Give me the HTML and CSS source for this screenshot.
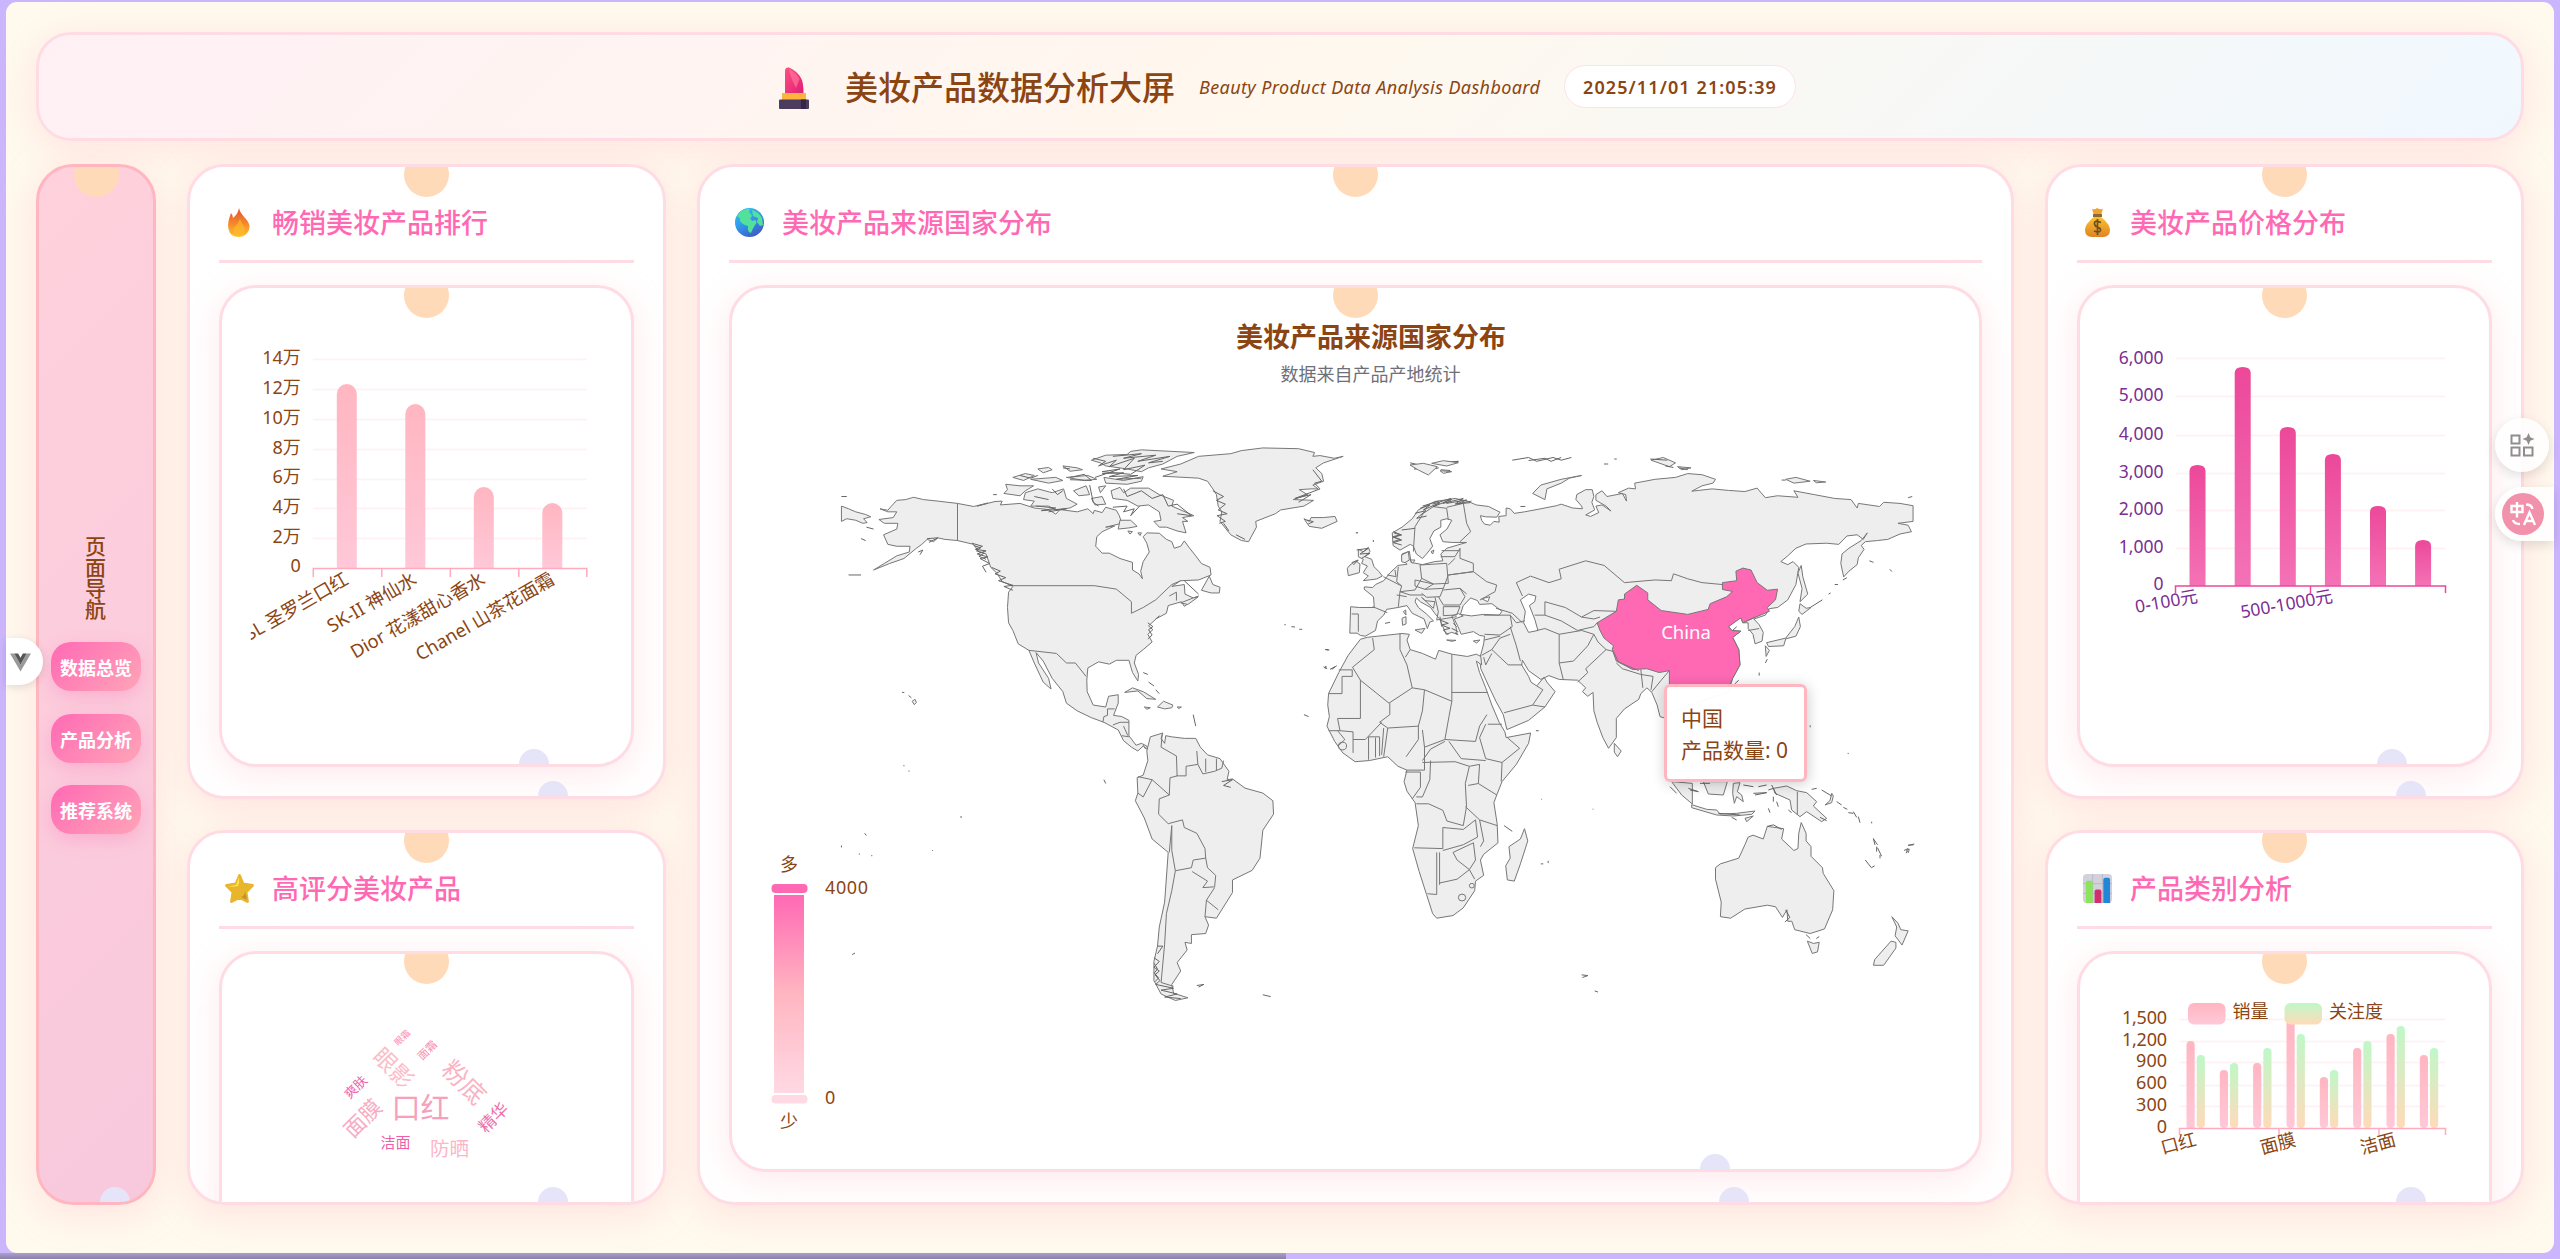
FILE: index.html
```html
<!DOCTYPE html>
<html lang="zh-CN">
<head>
<meta charset="utf-8">
<title>美妆产品数据分析大屏</title>
<link rel="stylesheet" href="styles.css">
</head>
<body>
<svg class="defs" width="0" height="0" aria-hidden="true">
  <defs>
    <linearGradient id="pinkBar" x1="0" y1="0" x2="0" y2="1"><stop offset="0" stop-color="#ffb6c1"/><stop offset="1" stop-color="#ffc8d8"/></linearGradient>
    <linearGradient id="hotBar" x1="0" y1="0" x2="0" y2="1"><stop offset="0" stop-color="#ec4899"/><stop offset="1" stop-color="#f472b6"/></linearGradient>
    <linearGradient id="mintBar" x1="0" y1="0" x2="0" y2="1"><stop offset="0" stop-color="#bff8c8"/><stop offset="1" stop-color="#ffdab9"/></linearGradient>
    <linearGradient id="scale" x1="0" y1="0" x2="0" y2="1"><stop offset="0" stop-color="#ff69b4"/><stop offset=".5" stop-color="#ffb6c1"/><stop offset="1" stop-color="#ffd9e4"/></linearGradient>
    <linearGradient id="flame" x1="0" y1="0" x2="0" y2="1"><stop offset="0" stop-color="#e8502e"/><stop offset=".55" stop-color="#f58a2a"/><stop offset="1" stop-color="#fdc52f"/></linearGradient>
    <linearGradient id="sea" x1="0" y1="0" x2=".6" y2="1"><stop offset="0" stop-color="#35c8f0"/><stop offset=".5" stop-color="#2f9ceb"/><stop offset="1" stop-color="#3f5fc8"/></linearGradient>
    <linearGradient id="gold" x1="0" y1="0" x2="0" y2="1"><stop offset="0" stop-color="#f9c22e"/><stop offset="1" stop-color="#e08322"/></linearGradient>
    <linearGradient id="lip" x1="0" y1="0" x2="1" y2="1"><stop offset="0" stop-color="#ff4f86"/><stop offset="1" stop-color="#e01e72"/></linearGradient>
  </defs>
</svg>

<div class="app">
  <header class="banner">
    <svg class="lipstick" viewBox="0 0 30 42"><path d="M6 27V4Q6 0 10 .5Q18 4 22 11Q24.500 15 24.500 27Z" fill="url(#lip)"/><path d="M10 2Q17 5 20.500 12L17 21Q11 10 10 2Z" fill="#ff7398" opacity=".7"/><rect x="3" y="26" width="24" height="7" fill="#ffb43f"/><rect x="0" y="32.500" width="30" height="9.500" rx="1" fill="#4b3b5c"/><path d="M22 32.500h5V42h-5Z" fill="#362746"/></svg>
    <h1>美妆产品数据分析大屏</h1>
    <span class="subtitle">Beauty Product Data Analysis Dashboard</span>
    <time class="clock">2025/11/01 21:05:39</time>
  </header>

  <div class="board">
    <nav class="side dots">
      <h2>页面导航</h2>
      <button>数据总览</button>
      <button>产品分析</button>
      <button>推荐系统</button>
    </nav>

    <div class="column">
      <section class="card dots">
        <div class="head">
          <svg class="icon" viewBox="0 0 29 29"><path d="M14 0Q15 5 21 11Q26 17 24 22Q21 29 14 29Q5 29 3.500 21Q2 15 6 5Q8 7 8 10Q13 6 14 0Z" fill="url(#flame)"/><path d="M15 11Q17 16 20 20Q19 27 13 28Q7 25 9 20Q13 16 15 11Z" fill="#fdb92e" opacity=".7"/></svg>
          <h3>畅销美妆产品排行</h3>
        </div>
        <div class="box dots">
          <svg class="chart" viewBox="222.700 288 408 476">
            <g class="grid"><path d="M313 359.500H587M313 389.500H587M313 419.500H587M313 449.500H587M313 479.500H587M313 508.500H587M313 538.500H587"/></g>
            <g fill="url(#pinkBar)">
              <path d="M337 568V394a10 10 0 0 1 20 0V568Z"/><path d="M405.500 568V414a10 10 0 0 1 20 0V568Z"/><path d="M474 568V497a10 10 0 0 1 20 0V568Z"/><path d="M542.500 568V513a10 10 0 0 1 20 0V568Z"/>
            </g>
            <path class="axis" d="M313.500 577V568.500H587V577M382 568V577M450.500 568V577M519 568V577"/>
            <g class="label end">
              <text x="301" y="363.500">14万</text><text x="301" y="393.500">12万</text><text x="301" y="423.500">10万</text><text x="301" y="453.500">8万</text><text x="301" y="483">6万</text><text x="301" y="513">4万</text><text x="301" y="542.500">2万</text><text x="301" y="572">0</text>
            </g>
            <svg x="251" y="540" width="360" height="160" viewBox="251 540 360 160">
              <g class="label end tilted">
                <text transform="translate(350 583) rotate(-30)">YSL 圣罗兰口红</text><text transform="translate(418.500 583) rotate(-30)">SK-II 神仙水</text><text transform="translate(487 583) rotate(-30)">Dior 花漾甜心香水</text><text transform="translate(556 583) rotate(-30)">Chanel 山茶花面霜</text>
              </g>
            </svg>
          </svg>
        </div>
      </section>

      <section class="card dots">
        <div class="head">
          <svg class="icon" viewBox="0 0 29 29"><path d="M14.500 1.500L18 10L27.500 11.500L21 18L22.500 27.500L14.500 23.500L6.500 27.500L8 18L1.500 11.500L11 10Z" fill="#e9b52b" stroke="#e9b52b" stroke-width="2.800" stroke-linejoin="round"/><path d="M14 3L11 11L3 12.500Q9 13 13 12Q15 8 14 3Z" fill="#ffe04d"/><path d="M20 17L22 26L16 23Q20 22 20 17Z" fill="#c2922a"/></svg>
          <h3>高评分美妆产品</h3>
        </div>
        <div class="box dots">
          <svg class="chart cloud" viewBox="223 955 408 476">
            <text x="421" y="1107" font-size="29" fill="#f7a0be">口红</text>
            <text transform="translate(395 1068) rotate(45)" font-size="23" fill="#fbbccb">眼影</text>
            <text transform="translate(466 1082) rotate(45)" font-size="25" fill="#fbb3c4">粉底</text>
            <text transform="translate(362 1118) rotate(-45)" font-size="21.500" fill="#f8abc2">面膜</text>
            <text transform="translate(355.500 1087.500) rotate(-45)" font-size="13" fill="#ee62ab">爽肤</text>
            <text transform="translate(402.500 1038.500) rotate(-45)" font-size="9" fill="#f78fac">眼霜</text>
            <text transform="translate(427 1050.500) rotate(-45)" font-size="11" fill="#f590ad">面霜</text>
            <text transform="translate(493 1117.500) rotate(-45)" font-size="17" fill="#ee6fab">精华</text>
            <text x="396" y="1142" font-size="15" fill="#ef5fa9">洁面</text>
            <text x="450" y="1148" font-size="19.500" fill="#fbb6c8">防晒</text>
          </svg>
        </div>
      </section>
    </div>

    <section class="card dots">
      <div class="head">
        <svg class="icon" viewBox="0 0 29 29"><circle cx="14.500" cy="14.500" r="14.500" fill="url(#sea)"/><path d="M2 8Q7 0 15 1Q13 5 16 6Q18 9 15 10L17 13L20 12Q23 14 20 17Q18 20 16 25Q12 24 13 18Q8 17 5 13Q6 10 2 8ZM17 2Q24 4 27 10L28 17L25 18L22 14L23 10L18 8Z" fill="#53e09a"/></svg>
        <h3>美妆产品来源国家分布</h3>
      </div>
      <div class="box dots">
        <svg class="chart" viewBox="732 288 1247 881">
          <text class="map-title" x="1371" y="347">美妆产品来源国家分布</text>
          <text class="map-note" x="1370.500" y="381">数据来自产品产地统计</text>

          <!-- Americas -->
          <g class="land" transform="translate(820 420) scale(.35714 .38265)">
            <path d="M60 225L80 232L100 240L128 247L142 253L122 258L132 268L120 270L100 262L75 258L60 265Z"/>
            <path d="M168 232L190 236L200 225L215 210L240 208L262 202L290 208L330 212L385 218L430 226L470 217L440 225L490 213L510 212L505 222L560 218L600 230L640 234L660 246L672 234L720 240L750 232L765 245L768 236L790 242L800 228L830 236L838 250L845 270L800 280L825 277L790 292L775 305L772 330L790 348L810 348L840 362L875 372L875 392L893 402L903 415L898 395L905 370L922 345L915 322L905 305L915 295L950 296L970 312L985 318L992 335L1010 330L1020 316L1035 335L1052 355L1068 375L1092 385L1095 405L1060 418L1010 420L985 435L1020 430L1022 455L1045 465L1060 460L1020 487L1012 475L975 485L970 505L940 520L950 512L920 538L932 548L918 560L930 580L905 600L885 615L880 635L892 665L890 682L875 660L865 628L830 628L810 638L780 632L750 648L747 680L748 710L765 745L800 750L808 722L835 718L835 740L822 772L845 775L865 785L865 825L885 850L900 845L915 852L918 862L905 852L890 865L872 855L850 838L835 810L795 790L760 778L720 760L690 740L680 710L650 675L625 630L605 608L612 635L640 675L647 703L625 685L600 635L585 602L555 585L540 550L528 530L525 490L528 450L540 435L510 422L495 400L478 385L465 350L445 345L430 325L385 315L350 312L330 308L318 318L300 312L285 325L270 335L235 362L195 375L150 392L180 375L215 355L250 345L252 330L215 330L190 325L178 300L215 285L218 270L180 270L165 260L205 255L215 240L190 240Z"/>
            <path d="M955 128L1010 115L1060 95L1150 88L1180 80L1240 73L1340 75L1385 85L1380 95L1400 93L1440 100L1465 95L1410 112L1388 125L1405 140L1410 160L1380 170L1395 180L1375 180L1342 182L1365 195L1325 208L1382 210L1355 225L1290 235L1275 245L1220 265L1222 280L1200 318L1180 315L1150 300L1120 265L1125 240L1115 225L1110 195L1100 180L1085 160L1060 152L960 147L1000 135Z"/>
            <path d="M575 190L610 180L650 190L682 180L690 205L720 220L700 230L660 235L640 225L590 225L600 212L570 208ZM520 168L560 172L598 172L575 185L560 198L515 192L525 182ZM760 105L800 92L860 90L870 82L900 78L1048 85L1000 95L960 115L920 125L900 135L860 128L800 120L785 112ZM815 185L840 176L850 190L870 178L920 178L950 195L990 210L985 225L1047 250L1015 255L1030 265L1015 265L1025 295L1000 290L970 280L950 280L935 265L955 262L950 240L920 222L890 225L860 210L820 205ZM795 150L850 158L905 148L900 160L860 168L800 165ZM540 150L575 140L600 145L570 158ZM590 155L660 150L680 158L640 165ZM610 128L640 124L650 130L625 138ZM680 120L720 125L735 130L700 134ZM710 185L745 172L755 195L725 198ZM780 175L800 172L785 190ZM690 150L750 145L775 155L740 158ZM840 262L870 262L888 278L865 282L835 285ZM760 205L790 200L800 220L770 222ZM1068 445L1090 408L1100 430L1120 437L1118 452L1095 452ZM1010 478L1045 465L1058 463L1030 482ZM853 712L875 700L905 710L940 730L915 728L890 708ZM945 750L962 735L988 745L985 752L965 755ZM908 750L925 752L915 756ZM1000 750L1012 750L1005 754ZM890 295L900 295L896 302ZM862 290L875 292L868 298ZM1355 258L1370 265L1375 255L1410 255L1442 252L1448 265L1405 283L1370 278ZM258 735L266 730L270 738L264 744Z"/>
            <path d="M915 865L925 828L960 818L955 832L965 845L968 825L985 828L1020 832L1052 832L1065 855L1085 875L1120 885L1145 918L1140 940L1155 938L1190 962L1240 975L1268 995L1270 1030L1240 1072L1232 1145L1210 1177L1155 1202L1155 1235L1110 1302L1078 1298L1088 1320L1080 1342L1040 1345L1040 1368L1022 1365L1028 1385L1000 1418L1010 1440L985 1475L990 1498L1030 1510L995 1517L955 1500L935 1465L935 1415L945 1375L950 1325L965 1260L975 1130L930 1095L908 1040L883 995L890 975L888 935L905 928L918 890Z"/>
            <g class="line">
              <path d="M385 218V316M540 433H768L830 442L872 475V505L905 490L940 470L985 430L1010 420M978 460L998 450V472M585 602L662 610L690 635L715 635L745 670M792 790L795 775L805 772V755H825M820 797L840 790L865 790M850 800L862 825M845 825L865 828M905 850L912 860"/>
              <path d="M958 822L955 855L998 878L1000 930L980 935L978 980L930 940L890 932M978 980L950 990L948 1030L975 1055L1015 1045L1020 1065L1055 1080L1078 1120L1080 1145L1045 1150L1040 1170L995 1178L985 1125L985 1060M1080 1145L1085 1170L1108 1190L1105 1220L1072 1222L1085 1205L1042 1180M1105 1222L1082 1255L1078 1298M1082 1255L1115 1280M978 1130L985 1060M995 1178L985 1230L970 1290L965 1370L955 1470L990 1480M998 930L1025 930L1025 905L1058 900L1055 865M1058 900L1072 925L1105 918M1080 885V920M1110 885V915M1105 918L1125 910L1130 890M930 940L905 985L890 975"/>
            </g>
            <g class="ragged">
              <path d="M425 322L455 330L435 338L465 342L440 350L470 358L448 362L475 375L455 382L465 398M430 328L450 334L438 342L460 348L445 356L465 364M480 385L505 395L490 402L520 412L500 420L540 432L515 435L540 445M765 100L800 108L780 120L830 105L810 122L880 100L850 130L910 118L870 142L790 135L840 128L770 150M820 95L900 88L850 100L940 92L890 108L980 95L920 112L960 108M790 140L850 138L810 148L890 145L830 155L900 152M650 180L665 195L680 185M600 200L640 208M560 145L590 152L610 145M680 125L700 128M850 180L860 200L900 185L930 205L960 195L975 225L1000 220L1040 250L1000 245M605 225L660 230L620 237L690 232L640 240M700 150L740 142L760 158L700 156M755 170L765 215L780 225M820 228L860 225L850 240L880 232L870 250L895 225M1020 420L1060 455M1100 185L1130 200L1110 210L1135 220L1115 235L1140 245L1112 250L1135 265L1118 270M1130 270L1145 290M1165 300L1190 312M1380 130L1405 160L1385 165L1400 180L1330 205L1375 195L1340 215M918 530L932 540L920 548L930 562L918 572M935 1405L950 1415L935 1430L950 1440L938 1450L952 1465L940 1475L990 1485L955 1490L1000 1500L965 1508L1010 1512M936 1420L945 1435L936 1445L948 1458L938 1468M945 1375L960 1375L945 1395M1125 945L1155 940L1130 955L1150 960M275 345L288 340L280 352M300 310L330 308L305 320"/>
              <path d="M60 200H75M80 405H115M115 310L128 315M130 280L150 285M230 712H236M248 720L256 726M795 940L800 950M905 660L918 665M920 685L935 695M940 705L950 715M1045 770L1052 800M125 1080L130 1086M90 1397L98 1393M1055 1478L1075 1475L1060 1482M1240 1502L1262 1507M1300 535H1304M1320 540L1330 541M1342 547H1350M1355 770L1368 775M1410 645L1420 650M1415 600H1422M60 1112V1117M110 1133V1136M145 1137V1140M395 1035V1040M315 1124V1126M235 902V905M249 916V919M485 195H495M1500 295H1505"/>
            </g>
          </g>

          <!-- Eurasia, Africa and Oceania -->
          <g class="land" transform="translate(1300 420) scale(.40816 .38265)">
            <path d="M410 212L432 222L462 226L490 241L482 254L455 253L442 250L445 262L452 272L466 275L475 265L488 267L487 252L505 250L505 230L515 232L525 244L550 240L590 232L628 224L640 220L668 230L692 232L690 225L676 208L678 195L700 182L716 182L720 200L715 215L722 235L700 248L712 252L732 242L725 225L740 222L762 238L750 225L725 210L725 195L740 185L752 200L790 192L800 212L798 195L780 190L805 178L822 180L820 165L870 155L920 150L950 140L985 143L1018 155L1012 165L985 172L960 186L1010 180L1050 184L1090 187L1120 178L1140 203L1170 198L1220 202L1210 185L1260 195L1310 205L1350 208L1365 230L1368 218L1420 226L1430 215L1470 218L1502 224V265L1465 270L1490 275L1498 292L1470 298L1440 312L1415 315L1385 318L1375 328L1382 338L1368 360L1365 378L1345 395L1332 410L1325 375L1328 350L1345 335L1375 315L1390 295L1380 312L1365 300L1340 303L1320 325L1290 322L1240 324L1215 335L1195 355L1178 370L1195 378L1208 370L1222 385L1215 430L1195 470L1170 490L1150 493L1140 510L1112 520L1125 535L1135 555L1132 578L1115 585L1110 560L1098 545L1098 530L1085 530L1080 517L1065 525L1050 540L1058 550L1080 552L1060 568L1075 600L1078 640L1060 675L1050 710L920 760L890 778L882 775L875 745L862 712L850 700L835 715L830 730L795 755L775 780L775 830L756 858L742 830L728 790L720 760L718 712L705 722L692 710L700 700L680 680L635 678L610 668L590 678L560 655L545 628L543 640L560 670L566 685L580 695L598 672L605 685L625 710L600 750L560 785L507 809L498 770L480 735L460 690L443 650L440 625L450 585L452 565L440 563L425 553L395 560L387 540L378 520L400 512L388 506L372 512L382 540L385 560L372 555L358 560L350 540L342 520L330 505L320 490L295 475L285 465L282 475L290 490L310 507L327 525L318 528L312 545L304 520L275 505L262 485L240 490L212 495L205 510L190 525L185 550L160 565L148 563L140 557L122 557L124 488L145 490L182 490L180 462L157 442L158 436L178 438L185 430L205 420L220 400L240 380L262 377L250 362L250 350L268 343L272 372L300 378L330 370L350 368L345 350L360 335L408 320L372 320L350 318L343 300L360 285L372 262L360 258L345 262L345 280L328 290L318 310L325 330L310 350L300 362L285 350L278 330L270 325L245 340L228 328L226 295L250 280L275 258L290 235L330 213L380 205Z"/>
            <path d="M148 573L165 568L190 565L250 558L268 560L262 575L270 600L300 610L332 625L340 602L372 612L410 618L432 612L443 618L445 640L432 630L440 660L455 700L470 745L488 790L502 815L505 830L565 818L560 845L530 900L495 945L482 980L475 1000L483 1055L485 1105L450 1135L442 1150L450 1190L430 1205L428 1230L400 1275L375 1295L335 1302L325 1290L310 1240L292 1180L276 1120L290 1060L282 1000L262 970L255 945L262 915L240 905L215 880L170 890L135 893L105 870L85 840L66 800L72 775L68 745L70 715L95 660L118 615Z"/>
            <path d="M690 145L660 152L640 165L605 180L600 208L570 192L590 170L640 155ZM1228 380L1232 410L1244 455L1225 475L1230 440L1220 400ZM1225 480L1240 492L1252 490L1230 508L1222 500ZM1222 515L1226 540L1215 565L1190 572L1185 590L1148 592L1143 582L1190 570L1212 540ZM1140 590L1150 602L1142 618ZM770 845L787 865L778 880L770 868ZM550 1068L558 1100L540 1160L525 1205L508 1202L504 1165L515 1145L512 1115L540 1095Z"/>
            <path d="M1018 1170L1030 1160L1075 1145L1090 1110L1098 1090L1110 1085L1135 1095L1145 1062L1185 1068L1180 1095L1210 1125L1220 1120L1222 1080L1228 1052L1240 1080L1240 1100L1252 1115V1140L1280 1170L1282 1185L1308 1230L1305 1280L1285 1330L1250 1342L1212 1332L1205 1310L1195 1310L1193 1280L1182 1300L1165 1272L1145 1268L1090 1278L1055 1302L1030 1298L1032 1260L1018 1200ZM1243 1362L1258 1368L1272 1365L1268 1390L1255 1394ZM1450 1298L1465 1315L1472 1332L1490 1335L1475 1372L1458 1348L1462 1325ZM1448 1362L1460 1365V1380L1430 1425L1405 1425L1408 1410Z"/>
            <path d="M860 105L890 98L920 112L905 122ZM1190 155L1215 150L1250 160L1210 165ZM1258 158L1288 162L1265 164ZM925 122L958 125L935 130Z"/>
            <path class="china" d="M728 530L775 500L780 470L795 468V455L825 432L852 452V470L885 498L950 508L1000 495L1005 480L1045 462L1060 448L1035 443V425L1070 420L1068 395L1085 387L1105 392L1120 425L1145 445L1170 442L1165 470L1145 490L1150 500L1110 518L1085 530L1080 517L1050 540L1058 550L1080 552L1060 568L1075 600L1078 640L1060 675L1050 700H905V655L880 660L850 650L815 652L775 630L765 600L768 590L745 570L735 550Z"/>
            <path class="water" d="M540 470L560 455L578 460L575 475L562 485L575 520L583 550L560 555L548 530L552 500ZM393 508L400 485L418 465L435 472L440 482L470 480L495 500L488 510L450 508L420 512ZM445 467L465 462L460 475Z"/>
            <g class="line">
              <path d="M178 570L182 600L130 645M95 653H128V670H103V715H70M128 645L148 680V780H92M148 680L218 740L275 700L262 640L245 600V558M270 600L258 620M275 700L305 705L372 735V612M372 712H460M372 735L365 775L355 835M305 705L300 760L290 800L215 805L195 790L220 770V740M300 810L305 855L355 835L430 840L440 800L458 770M460 795H495M455 795L440 830L455 885L495 895L538 858L508 830M365 840L395 885L455 890M300 890L320 860L355 840M300 895L380 893L415 905L405 950L408 1010L400 1060L360 1048L350 1020L315 1003H285M215 805L205 880M290 800V835L260 880M305 855V915H262M258 920L295 920L295 960L275 990M320 890L318 940L300 985H285M415 905L440 900L437 950L412 955M437 950L482 980M405 1010L440 1045L483 1060M350 1065V1120L280 1118M350 1065L400 1070L430 1045L435 1090L400 1110L350 1125M440 1045L450 1100L442 1115M375 1130L425 1105L430 1150L415 1175L385 1150ZM342 1130V1215M335 1130V1240L312 1238M342 1210L385 1200L415 1175L428 1200M92 780L98 812H70M98 812L130 815V870M130 835H160L200 790M168 888V828H195V878M185 830V882M205 805L200 875M92 812L110 835L95 850M495 895L493 945"/>
              <circle cx="397" cy="1248" r="9"/><circle cx="421" cy="1217" r="6"/><circle cx="104" cy="852" r="10"/>
              <path d="M530 425L565 408L610 425L640 415L635 390L700 368L745 380L795 425L870 418L910 420L915 402L950 415L985 425L1035 430M530 425L545 460M775 500L720 498L690 515L650 490L600 475V510H575M600 510L640 525L680 550L720 540L728 530M690 515L720 520L735 515M515 540L530 590L540 630M580 550L600 545L635 560V635L645 678M635 635L670 630L705 590L720 560L690 550L635 560M680 685L705 660L700 650L750 600L730 580L720 560M750 600L768 605L780 632L830 655M775 635L790 650L835 665M835 652L840 700M835 665L865 670L860 705M905 655L885 680L862 710M445 615L470 600L510 640L545 640M470 600L490 570L515 560M500 765L570 745L600 750M570 745L595 705L580 695M452 575L490 565M450 510H515L520 540L490 562L452 560M480 492L520 505L545 530M515 510L530 530L550 525M1085 530L1115 515M1098 550L1125 545M450 620L455 640L470 610"/>
            </g>
            <g class="ragged">
              <path d="M270 112L310 122L280 128L330 122L300 135L340 125M350 110L388 108L350 115M345 130L368 132M520 105L560 98L580 108L620 98L640 105L665 98M560 106L600 100L615 108L640 98M745 115H755M770 102H776M858 102L900 105M895 120L915 124M930 125L950 130M540 226H552M1180 157H1190M1490 203L1500 200M1395 368L1405 372M1445 390L1450 396M1330 418L1340 412M1310 430H1318M1295 455L1300 452M1250 490L1280 470M1145 625L1140 635M1125 660V668M1065 690L1075 680M1240 1345L1250 1355M1265 1355L1272 1350M1405 1095L1415 1110M1415 1118L1425 1140M1385 1150L1400 1170L1408 1165M1480 1125L1490 1120L1485 1132M1490 1112L1505 1108M690 1450L705 1452L692 1457M722 1492L730 1495M590 1160H596M608 1152V1158M578 812H585M500 1060L520 1075M60 648H65M78 652L90 642M62 600H70M300 225L340 212M325 220L370 205L350 218L400 205L380 220L420 212M230 295L245 300L228 305L245 312L228 318M1250 798V803M1343 870V873M592 990V992M718 1016V1018M1145 1062L1160 1058L1180 1070M1190 1280L1200 1300L1188 1312M1070 540L1060 550"/>
            </g>
          </g>

          <!-- Europe -->
          <g class="land" transform="translate(1300 460) scale(.33333)">
            <path d="M175 268L190 275L205 262L210 275L195 290L215 298L222 320L237 335L247 348L230 357L190 362L205 348L190 338L202 318L185 310L190 298L175 290ZM150 315L168 303L180 312L178 338L145 347L142 325ZM305 305V285L325 275L328 300L315 308ZM330 300L345 300L338 310ZM330 15L370 10L412 20L385 45L355 30ZM395 10L430 2L475 8L440 18ZM420 32L455 35L430 40ZM306 475L318 470V492L308 496ZM310 455L317 450L318 465ZM345 510L375 505L365 520ZM520 543L540 540L530 549ZM440 540L468 541L455 544ZM393 275L402 270L398 282Z"/>
            <g class="line">
              <path d="M340 275L345 200L370 160L400 140L440 145L445 180M440 142L490 130L500 190L512 215L480 245M425 272H480M422 290L465 290L480 265V295L520 310V335L445 345M465 295L445 315M360 315L440 310L445 370L400 372L365 355ZM295 320L290 365L305 378L300 395L345 390L365 355M250 350L305 378M262 345L288 350L285 330M300 395L295 440M218 440L262 458M155 462H175V515M300 395L330 405L370 405M345 360L400 372L375 388L345 378ZM375 388L430 385L420 410L380 412L365 400M430 385L445 345L520 335L560 365L590 375L585 395L540 420M430 390L480 385L495 410L480 435H430L415 410M480 385L500 402M430 440H480L470 465L430 467ZM405 412L415 455L410 480L440 475L470 470M365 412L400 445L405 425L375 422ZM420 470L425 500M290 405L320 410"/>
            </g>
            <g class="ragged">
              <path d="M280 215L305 225L280 232L305 240L280 248L305 255M305 210L345 205M360 145L390 135L370 150L420 128L400 140L455 118L440 130L500 120L470 132L510 128M345 160L378 152L350 175L380 168M170 270L205 265L180 282L210 280L185 295M155 308L175 300L160 315M420 480L445 490L425 495L450 505L430 510L445 525M460 490L470 500M455 505L475 515M465 518L475 525M255 490L270 487M20 180L40 185L25 192M170 218H174M220 240V246M80 570H88M75 620H80M90 628L105 620"/>
            </g>
          </g>

          <!-- Indonesia and New Guinea -->
          <g class="land" transform="translate(1640 780) scale(.33333)">
            <path d="M95 5L125 45L157 72V10ZM155 74L200 88L230 90L240 102L290 100L345 93L335 103L280 108L230 105L155 83ZM190 5L205 42L250 45L262 5ZM280 10L300 8L292 35L305 45L310 65L290 50L283 70L278 40ZM400 25L440 18L470 32L500 38L530 65L520 78L560 115L545 125L500 95L480 110L455 90L450 60L405 40ZM315 115L340 108L320 125ZM555 75L570 62L575 40L580 48L575 68ZM800 210L808 208L805 218Z"/>
            <path class="line" d="M472 35V105"/>
            <path class="ragged" d="M90 20L110 40M145 25L175 35L150 30M180 10H210M310 15L340 20M355 20L380 15M340 40L380 38L345 45M395 15L410 45M400 25L385 30M410 65L415 80M400 50V65M385 85L390 98M445 90L455 98M540 112L560 122M590 65L605 75M610 82L622 88M625 98L640 100M640 95L650 112M655 110L660 128M545 30L575 48M235 100L300 105M275 112L290 120M700 175L705 195M710 200V215M720 225V235M805 195L820 195M695 125V130M515 28L530 25"/>
          </g>

          <text class="map-name" x="1686" y="638.500">China</text>

          <rect x="774" y="895" width="30" height="198" fill="url(#scale)"/>
          <rect x="771.500" y="884" width="36" height="9" rx="4" fill="#ff69b4"/>
          <rect x="771.500" y="1095" width="36" height="8.500" rx="4" fill="#ffd9e4"/>
          <g class="label">
            <text x="780" y="870.500">多</text><text x="780" y="1127.500">少</text><text x="825" y="893.500" textLength="43">4000</text><text x="825" y="1104">0</text>
          </g>
        </svg>
        <div class="tooltip"><div>中国</div><div>产品数量: 0</div></div>
      </div>
    </section>

    <div class="column">
      <section class="card dots">
        <div class="head">
          <svg class="icon" viewBox="0 0 29 29"><path d="M9 1Q12 2 14 0Q17 2 20 1L18 7H11Z" fill="#f0a22c"/><rect x="10" y="6" width="9" height="3" fill="#8b6a35"/><path d="M11 9H18Q27 16 27 22Q27 29 20 29H9Q2 29 2 22Q2 16 11 9Z" fill="url(#gold)"/><path d="M18 14.500Q11 11.500 11.500 16Q12 18.500 14.500 19Q18 20 17.500 22.500Q16.500 25 11 23M14.500 11V27" fill="none" stroke="#6b4e26" stroke-width="1.700"/></svg>
          <h3>美妆产品价格分布</h3>
        </div>
        <div class="box dots">
          <svg class="chart" viewBox="2080 288 408 476">
            <g class="grid"><path d="M2175 358.500H2445M2175 396.500H2445M2175 435.500H2445M2175 473.500H2445M2175 510.500H2445M2175 548.500H2445"/></g>
            <g fill="url(#hotBar)">
              <path d="M2189 586V471q0-6 8-6t8 6V586Z"/><path d="M2234.200 586V373q0-6 8-6t8 6V586Z"/><path d="M2279.300 586V433q0-6 8-6t8 6V586Z"/><path d="M2324.400 586V460q0-6 8-6t8 6V586Z"/><path d="M2369.500 586V512q0-6 8-6t8 6V586Z"/><path d="M2414.600 586V546q0-6 8-6t8 6V586Z"/>
            </g>
            <path class="axis hot" d="M2175 593V586H2445V593M2310 586V593"/>
            <g class="label end purple">
              <text x="2163" y="364">6,000</text><text x="2163" y="401">5,000</text><text x="2163" y="439.500">4,000</text><text x="2163" y="477.500">3,000</text><text x="2163" y="514.500">2,000</text><text x="2163" y="552.500">1,000</text><text x="2163" y="590">0</text>
              <text transform="translate(2198 602) rotate(-10)">0-100元</text><text transform="translate(2333 602) rotate(-10)">500-1000元</text>
            </g>
          </svg>
        </div>
      </section>

      <section class="card dots">
        <div class="head">
          <svg class="icon" viewBox="0 0 30 30"><rect width="30" height="30" rx="4" fill="#d3d1dc"/><path d="M0 10H30M0 20H30M10 0V30M20 0V30" stroke="#b9b6c6" stroke-width="1"/><path d="M3 30V9Q3 7 5 7H8Q10 7 10 9V30Z" fill="#8ce35c"/><path d="M12 30V18Q12 16 14 16H17Q19 16 19 18V30Z" fill="#d32f6d"/><path d="M21 30V6Q21 4 23 4H26Q28 4 28 6V30Z" fill="#2185d8"/></svg>
          <h3>产品类别分析</h3>
        </div>
        <div class="box dots">
          <svg class="chart" viewBox="2080 954 408 476">
            <g class="grid"><path d="M2179 1019.500H2445M2179 1041.500H2445M2179 1062.500H2445M2179 1085.500H2445M2179 1106.500H2445"/></g>
            <g fill="url(#pinkBar)">
              <rect x="2186" y="1041" width="8.200" height="91" rx="4"/><rect x="2219.300" y="1070" width="8.200" height="58" rx="4"/><rect x="2252.600" y="1063" width="8.200" height="65" rx="4"/><rect x="2286" y="1019" width="8.200" height="109" rx="4"/><rect x="2319.300" y="1077" width="8.200" height="51" rx="4"/><rect x="2352.600" y="1048" width="8.200" height="80" rx="4"/><rect x="2386" y="1034" width="8.200" height="94" rx="4"/><rect x="2419.300" y="1055" width="8.200" height="73" rx="4"/>
            </g>
            <g fill="url(#mintBar)">
              <rect x="2196.200" y="1055" width="8.200" height="73" rx="4"/><rect x="2229.500" y="1063" width="8.200" height="65" rx="4"/><rect x="2262.800" y="1048" width="8.200" height="80" rx="4"/><rect x="2296.200" y="1034" width="8.200" height="94" rx="4"/><rect x="2329.500" y="1070" width="8.200" height="58" rx="4"/><rect x="2362.800" y="1041" width="8.200" height="87" rx="4"/><rect x="2396.200" y="1026" width="8.200" height="102" rx="4"/><rect x="2429.500" y="1048" width="8.200" height="80" rx="4"/>
            </g>
            <rect x="2180" y="1128" width="264" height="5" fill="#fff"/>
            <path class="axis" d="M2179 1135V1128.500H2445V1135M2278.500 1128V1135M2378.500 1128V1135"/>
            <rect x="2187.500" y="1003" width="37.500" height="21.500" rx="6" fill="url(#pinkBar)"/><rect x="2284" y="1003" width="37.500" height="21.500" rx="6" fill="url(#mintBar)"/>
            <g class="label"><text x="2232" y="1018">销量</text><text x="2328.500" y="1018">关注度</text></g>
            <g class="label end">
              <text x="2166.500" y="1024" textLength="45">1,500</text><text x="2166.500" y="1046" textLength="45">1,200</text><text x="2166.500" y="1067">900</text><text x="2166.500" y="1089">600</text><text x="2166.500" y="1111">300</text><text x="2166.500" y="1132.500">0</text>
              <text transform="translate(2197 1145) rotate(-15)">口红</text><text transform="translate(2296.500 1145) rotate(-15)">面膜</text><text transform="translate(2396.500 1145) rotate(-15)">洁面</text>
            </g>
          </svg>
        </div>
      </section>
    </div>
  </div>
</div>

<div class="vue-tab"><svg viewBox="0 0 22 19"><path d="M0 0H4.500L11 11.500L17.500 0H22L11 19Z" fill="#9a9a9a"/><path d="M4.500 0H8.500L11 4.500L13.500 0H17.500L11 11.500Z" fill="#555"/></svg></div>
<div class="float-apps"><svg viewBox="0 0 24 24" fill="none" stroke="#8e8e8e" stroke-width="2"><path d="M1.500 2.500H9.500V10.500H1.500ZM1.500 14.500H9.500V22.500H1.500ZM14 14.500H22.500V22.500H14Z"/><path d="M18.500 0L20.300 4.200L24.500 6L20.300 7.800L18.500 12L16.700 7.800L12.500 6L16.700 4.200Z" fill="#8e8e8e" stroke="none"/></svg></div>
<div class="float-lang"><svg viewBox="0 0 42 42"><circle cx="21" cy="21" r="21" fill="#f191ab"/><g fill="none" stroke="#fff" stroke-width="2.400"><path d="M9.500 13H20.500V19H9.500ZM15 9V24.500"/><path d="M24 11.500Q29.500 11.500 30.500 16M11 27Q12 31 18 31"/><path d="M22 32L27.500 19.500L33 32M24.500 28H30.500"/></g></svg></div>
<div class="bottom-shade"></div>
</body>
</html>
```
FILE: styles.css
```css
* { box-sizing: border-box; }

html, body { height: 100%; }

body {
  margin: 0;
  padding: 2px 6px 6px;
  overflow: hidden;
  background: #cbb5fd;
  color: #8b4513;
  font-family: "Noto Sans", "Noto Sans CJK SC", sans-serif;
}

h1, h2, h3 { margin: 0; font-weight: 500; }

.defs { position: absolute; }

.app {
  height: 1251px;
  width: 2548px;
  padding: 30px 30px 48px;
  border-radius: 11px;
  background: #fff9ee;
  display: flex;
  flex-direction: column;
  gap: 23px;
}

.banner {
  height: 109px;
  border: 3px solid #ffdce4;
  border-radius: 35px;
  background: linear-gradient(135deg, #fff0f5 0%, #fff8ee 50%, #f0f8ff 100%);
  box-shadow: 0 8px 36px rgba(255, 182, 193, .3);
  display: flex;
  align-items: center;
  padding-left: 740px;
}

.lipstick { width: 30px; height: 42px; flex: none; margin-top: 2px; }

.banner h1 {
  margin: 0 0 1px 36px;
  width: 330px;
  font: 500 33px/1 "Noto Sans CJK SC", sans-serif;
  white-space: nowrap;
}

.subtitle {
  margin-left: 24px;
  width: 365px;
  font: italic 400 18px/1 "Noto Sans", sans-serif;
  letter-spacing: .39px;
  white-space: nowrap;
}

.clock {
  width: 232px;
  height: 43px;
  border: 1px solid #ffe0e8;
  border-radius: 22px;
  background: #fff;
  display: grid;
  place-items: center;
  font-size: 18px;
  font-weight: 600;
  letter-spacing: 1.1px;
  white-space: nowrap;
}

.board {
  flex: 1;
  min-height: 0;
  display: grid;
  grid-template-columns: 120px 479px 1317px 479px;
  gap: 31px;
}

.column {
  min-height: 0;
  display: grid;
  grid-template-rows: 635px 375px;
  gap: 31px;
}

.dots { position: relative; overflow: hidden; }

.dots::before,
.dots::after {
  content: "";
  position: absolute;
  border-radius: 50%;
}

.dots::before {
  width: 45px;
  height: 45px;
  top: -15px;
  left: calc(50% - 22.5px);
  background: #ffdab9;
}

.dots::after {
  width: 30px;
  height: 30px;
  bottom: -15px;
  right: 20%;
  background: #e6e4f8;
}

.side {
  border: 3px solid #ffb6c1;
  border-radius: 37px;
  background: linear-gradient(135deg, #ffd1dc, #f8c8dc);
  box-shadow: 0 8px 36px rgba(255, 182, 193, .35);
  padding-top: 369px;
  display: flex;
  flex-direction: column;
  align-items: center;
}

.side h2 {
  height: 84px;
  margin: 0 2px 22px 0;
  font: 500 21px/21px "Noto Sans CJK SC", sans-serif;
  writing-mode: vertical-rl;
}

.side button {
  width: 90px;
  height: 49px;
  margin-bottom: 22.500px;
  padding: 0;
  border: 0;
  border-radius: 20px;
  background: linear-gradient(135deg, #ff69b4, #ffa5b8);
  box-shadow: 0 6px 18px rgba(255, 105, 180, .3);
  color: #fff;
  font: 700 18px/50px "Noto Sans CJK SC", sans-serif;
}

.card {
  min-height: 0;
  border: 3px solid #ffdce4;
  border-radius: 37px;
  background: #fff;
  padding: 29px;
  display: flex;
  flex-direction: column;
  box-shadow: 0 8px 36px rgba(255, 182, 193, .35);
}

.head {
  flex: none;
  height: 67px;
  border-bottom: 3px solid #ffdce4;
  padding: 0 0 12px 6px;
  margin-bottom: 22px;
  display: flex;
  align-items: center;
  gap: 18px;
}

.icon { width: 29px; height: 29px; }

.head h3 {
  color: #ff69b4;
  font: 500 27px/1 "Noto Sans CJK SC", sans-serif;
  margin-bottom: 1px;
}

.box {
  flex: none;
  height: 482px;
  border: 3px solid #ffdce4;
  border-radius: 37px;
  background: #fff;
  box-shadow: 0 8px 36px rgba(255, 182, 193, .3);
}

.board > .card > .box { height: 887px; }

.chart { display: block; width: 100%; height: 100%; }

.grid { stroke: #fff0f3; stroke-width: 1.5; }
.axis { fill: none; stroke: #ffabbd; stroke-width: 1.5; }
.axis.hot { stroke: #ec4899; }
.label { fill: #8b4513; font-size: 18px; }
.label.end { text-anchor: end; }
.label.tilted { font-size: 18.4px; }
.label.purple { fill: #7b2d91; font-size: 17.5px; }

.cloud text {
  font-family: "Noto Sans CJK SC", sans-serif;
  text-anchor: middle;
  dominant-baseline: central;
}

.map-title { font-size: 27px; font-weight: 700; text-anchor: middle; fill: #8b4513; }
.map-note { font-size: 18px; text-anchor: middle; fill: #6e7079; }
.map-name { font-size: 18.5px; text-anchor: middle; fill: #fff; }

.land path,
.land circle {
  fill: #eee;
  stroke: #777;
  stroke-width: 1;
  stroke-linejoin: round;
  vector-effect: non-scaling-stroke;
}

.land .china { fill: #ff69b4; }
.land .water { fill: #fff; }
.land .line path,
.land path.line,
.land .line circle { fill: none; }
.land .ragged path,
.land path.ragged { fill: none; stroke: #666; }

.tooltip {
  position: absolute;
  left: 932px;
  top: 396px;
  width: 143px;
  height: 98px;
  padding: 15px 0 0 14px;
  border: 3px solid #ffb6c1;
  border-radius: 6px;
  background: rgba(255, 255, 255, .97);
  box-shadow: 1px 2px 14px rgba(0, 0, 0, .2);
  font-size: 21px;
  line-height: 32px;
  white-space: nowrap;
}

.vue-tab {
  position: absolute;
  left: 6px;
  top: 638px;
  width: 37px;
  height: 47px;
  padding: 15px 0 0 4px;
  border-radius: 0 24px 24px 0;
  background: #fff;
  box-shadow: 0 2px 8px rgba(0, 0, 0, .12);
}

.vue-tab svg { display: block; width: 21px; height: 19px; }

.float-apps {
  position: absolute;
  left: 2495px;
  top: 418px;
  width: 54px;
  height: 54px;
  border-radius: 50%;
  background: rgba(255, 255, 255, .85);
  box-shadow: 0 4px 12px rgba(0, 0, 0, .12);
  display: grid;
  place-items: center;
}

.float-apps svg { width: 24px; height: 24px; overflow: visible; }

.float-lang {
  position: absolute;
  left: 2495px;
  top: 487px;
  width: 59px;
  height: 54px;
  padding: 6px 0 0 6.500px;
  border-radius: 27px 0 0 27px;
  background: rgba(255, 255, 255, .85);
  box-shadow: 0 4px 12px rgba(0, 0, 0, .12);
}

.float-lang svg { display: block; width: 42px; height: 42px; }

.bottom-shade {
  position: absolute;
  left: 0;
  top: 1253px;
  width: 1286px;
  height: 6px;
  background: linear-gradient(#a99fd0, #8c7fa6);
}
```
